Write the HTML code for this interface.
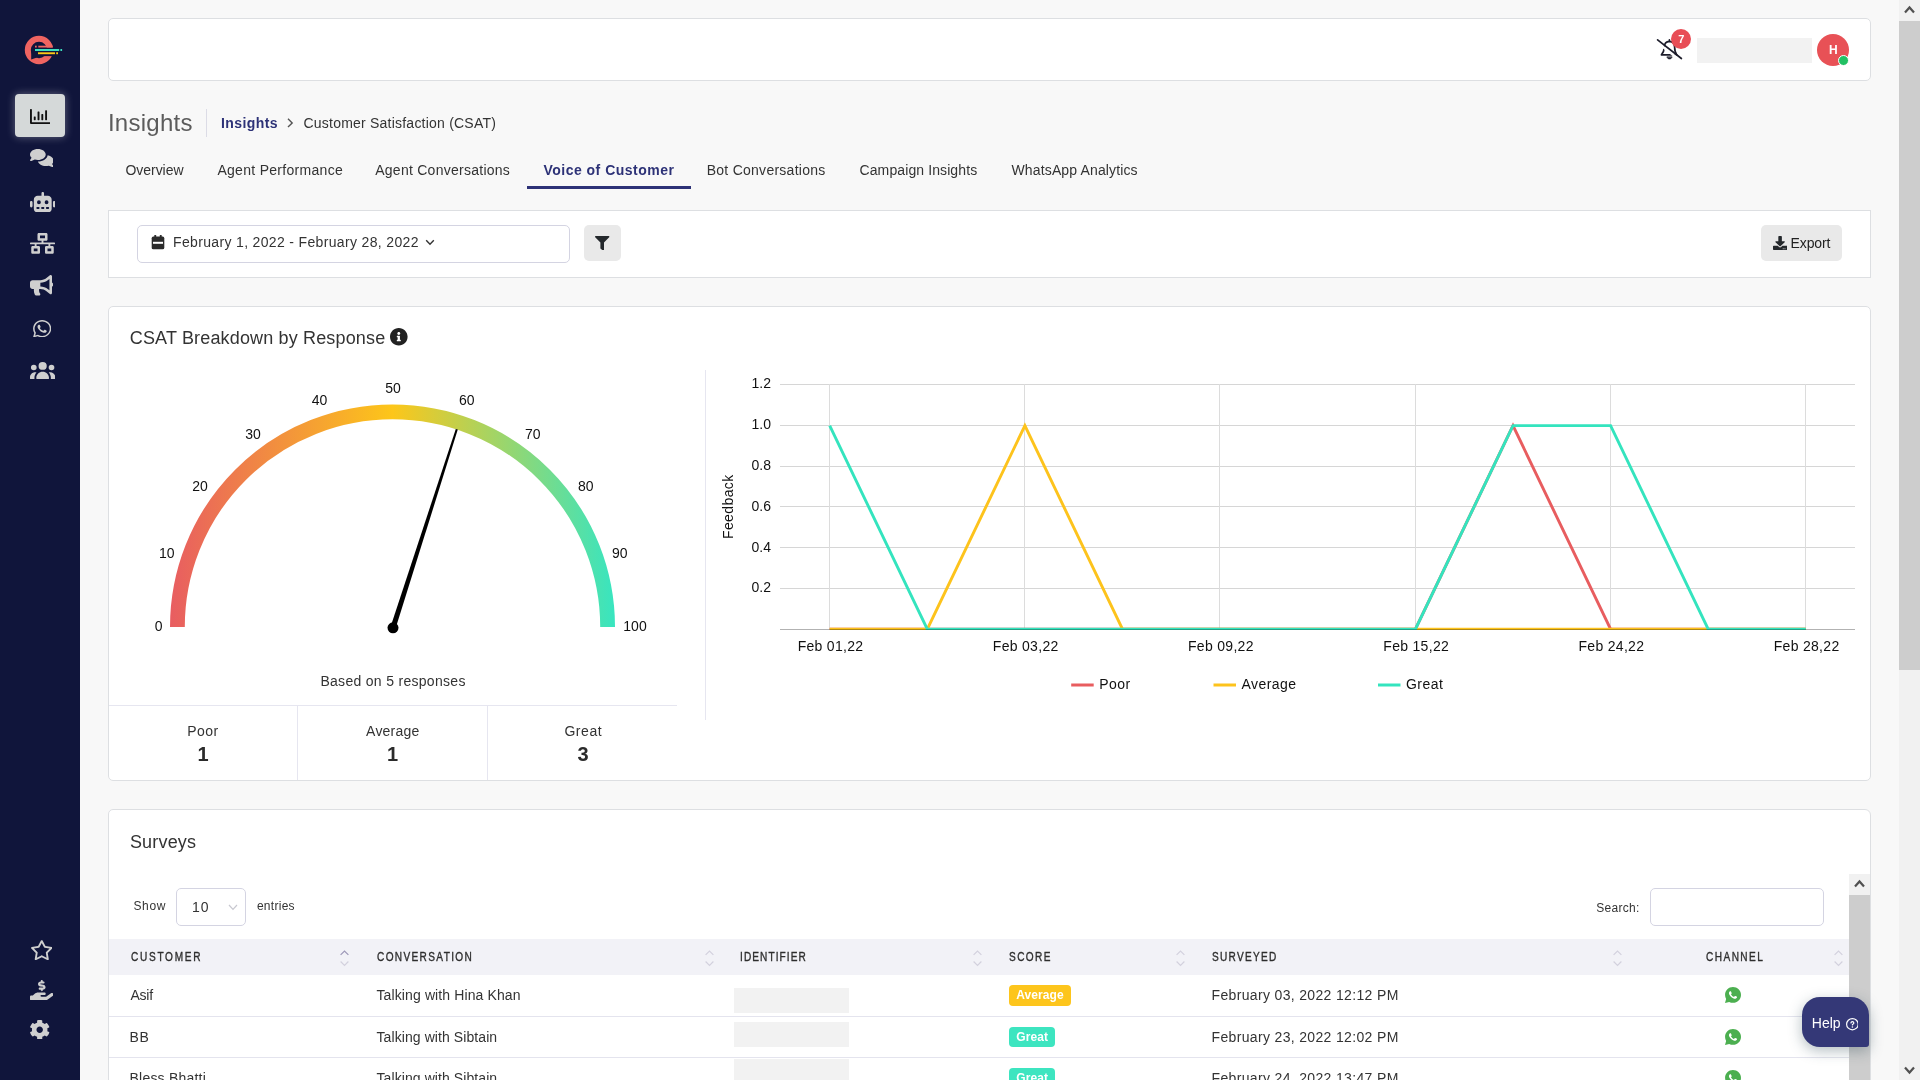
<!DOCTYPE html>
<html lang="en">
<head>
<meta charset="utf-8">
<title>Insights - Customer Satisfaction (CSAT)</title>
<style>
*{box-sizing:border-box;margin:0;padding:0}
html,body{width:1920px;height:1080px;overflow:hidden}
body{background:#f8f8f8;font-family:"Liberation Sans",Arial,sans-serif;color:#333;font-size:14px;position:relative}
#wrap{position:absolute;left:0;top:0;width:1920px;height:1080px;will-change:transform;transform:translateZ(0)}
.abs{position:absolute}
.t{position:absolute;white-space:nowrap;line-height:20px;height:20px}
#sidebar{position:absolute;left:0;top:0;width:80px;height:1080px;background:#10153b}
#sidebar svg{fill:#cfcfcf}
.card{position:absolute;background:#fff;border:1px solid #dddfe2}
.ph{position:absolute;background:#f2f2f2}
.rl{position:absolute;left:109px;width:1740px;height:1px;background:#e4e4ee}
.sa{position:absolute;width:9px;height:5.4px;fill:none;stroke:#d3d1de;stroke-width:1.2}
</style>
</head>
<body>
<div id="wrap">
<div id="sidebar"><svg class="abs" style="left:20px;top:30px;width:50px;height:40px;fill:none" viewBox="20 30 50 40">
<circle cx="39" cy="50" r="11.2" stroke="#ef6461" stroke-width="6"/>
<path d="M31.2 50 L31.2 59.6 L37 57.5 Z" fill="#10153b"/>
<rect x="44" y="47.5" width="11" height="8.6" fill="#10153b"/>
<rect x="38.3" y="45.7" width="14.2" height="1.8" fill="#ef6461"/><rect x="35" y="45.7" width="1.7" height="1.8" fill="#ef6461"/>
<rect x="35" y="49" width="24.2" height="2" fill="#3de0c0"/><rect x="60.4" y="49" width="1.7" height="2" fill="#3de0c0"/>
<rect x="38" y="52.3" width="17" height="1.9" fill="#ffc914"/><rect x="56.2" y="52.3" width="1.8" height="1.9" fill="#ffc914"/>
</svg><div class="abs" style="left:15px;top:94px;width:50px;height:43px;background:#d5d9d9;border-radius:4px;box-shadow:0 0 9px rgba(255,255,255,.35)"></div><svg class="abs" style="left:30.0px;top:108.8px;width:20.2px;height:15.0px;fill:#111;" viewBox="0 64 512 384" preserveAspectRatio="none"><path d="M396.8 352h22.4c6.4 0 12.8-6.4 12.8-12.8V108.8c0-6.4-6.4-12.8-12.8-12.8h-22.4c-6.4 0-12.8 6.4-12.8 12.8v230.4c0 6.4 6.4 12.8 12.8 12.8zm-192 0h22.4c6.4 0 12.8-6.4 12.8-12.8V140.8c0-6.4-6.4-12.8-12.8-12.8h-22.4c-6.4 0-12.8 6.4-12.8 12.8v198.4c0 6.4 6.4 12.8 12.8 12.8zm96 0h22.4c6.4 0 12.8-6.4 12.8-12.8V204.8c0-6.4-6.4-12.8-12.8-12.8h-22.4c-6.4 0-12.8 6.4-12.8 12.8v134.4c0 6.4 6.4 12.8 12.8 12.8zM496 400H48V80c0-8.84-7.16-16-16-16H16C7.16 64 0 71.16 0 80v336c0 17.67 14.33 32 32 32h464c8.84 0 16-7.16 16-16v-16c0-8.84-7.16-16-16-16zm-387.2-48h22.4c6.4 0 12.800-6.4 12.800-12.8v-70.4c0-6.4-6.4-12.8-12.8-12.8h-22.4c-6.4 0-12.8 6.4-12.8 12.8v70.4c0 6.4 6.4 12.8 12.8 12.800z"/></svg><svg class="abs" style="left:29.6px;top:149.3px;width:23.6px;height:18.1px;" viewBox="-0.0 -32 576.0 576.0" preserveAspectRatio="none"><path d="M384 144c0 97.2-86 176-192 176-26.7 0-52.1-5-75.2-14l-81.6 43.2c-9.3 4.9-20.7 3.2-28.2-4.2s-9.2-18.9-4.2-28.2l35.6-67.2C14.3 220.2 0 183.6 0 144 0 46.8 86-32 192-32s192 78.8 192 176m0 368c-94.1 0-172.4-62.1-188.8-144 120-1.5 224.3-86.9 235.8-202.7 83.3 19.2 145 88.3 145 170.7 0 39.6-14.3 76.2-38.4 105.6l35.6 67.2c4.9 9.3 3.2 20.7-4.2 28.2s-18.9 9.2-28.2 4.2L459.2 498c-23.1 9-48.5 14-75.2 14"/></svg><svg class="abs" style="left:29.6px;top:191.5px;width:25.5px;height:20.5px;" viewBox="0 -32 640 512" preserveAspectRatio="none"><path d="M352 0c0-17.7-14.3-32-32-32s-32 14.3-32 32v64h-96c-53 0-96 43-96 96v224c0 53 43 96 96 96h256c53 0 96-43 96-96V160c0-53-43-96-96-96h-96zM160 368c0-13.3 10.7-24 24-24h32c13.3 0 24 10.7 24 24s-10.7 24-24 24h-32c-13.3 0-24-10.7-24-24m120 0c0-13.3 10.7-24 24-24h32c13.3 0 24 10.7 24 24s-10.7 24-24 24h-32c-13.3 0-24-10.7-24-24m120 0c0-13.3 10.7-24 24-24h32c13.3 0 24 10.7 24 24s-10.7 24-24 24h-32c-13.3 0-24-10.7-24-24M224 176a48 48 0 1 1 0 96 48 48 0 1 1 0-96m144 48a48 48 0 1 1 96 0 48 48 0 1 1-96 0m-304 0c0-17.7-14.3-32-32-32S0 206.3 0 224v96c0 17.7 14.3 32 32 32s32-14.3 32-32zm544-32c-17.7 0-32 14.3-32 32v96c0 17.7 14.3 32 32 32s32-14.3 32-32v-96c0-17.7-14.3-32-32-32"/></svg><svg class="abs" style="left:30.0px;top:233.0px;width:25.0px;height:20.8px;" viewBox="0 0 640 512" preserveAspectRatio="none"><path d="M640 264v-16c0-8.840-7.160-16-16-16H344v-40h72c17.670 0 32-14.330 32-32V32c0-17.670-14.330-32-32-32H224c-17.670 0-32 14.330-32 32v128c0 17.670 14.330 32 32 32h72v40H16c-8.840 0-16 7.160-16 16v16c0 8.840 7.160 16 16 16h104v40H64c-17.670 0-32 14.330-32 32v128c0 17.670 14.330 32 32 32h160c17.670 0 32-14.330 32-32V352c0-17.670-14.330-32-32-32h-56v-40h304v40h-56c-17.670 0-32 14.330-32 32v128c0 17.670 14.330 32 32 32h160c17.670 0 32-14.330 32-32V352c0-17.670-14.330-32-32-32h-56v-40h104c8.840 0 16-7.160 16-16zM256 128V64h128v64H256zm-64 320H96v-64h96v64zm352 0h-96v-64h96v64z"/></svg><svg class="abs" style="left:29.7px;top:275.3px;width:23.3px;height:20.5px;" viewBox="0 0 576 512" preserveAspectRatio="none"><path d="M576 240c0-23.630-12.950-44.040-32-55.120V32.010C544 23.260 537.020 0 512 0c-7.120 0-14.190 2.380-19.980 7.020l-85.030 68.030C364.280 109.190 310.660 128 256 128H64c-35.350 0-64 28.650-64 64v96c0 35.350 28.650 64 64 64h33.700c-1.390 10.480-2.180 21.140-2.180 32 0 39.770 9.260 77.350 25.560 110.940 5.190 10.690 16.520 17.060 28.400 17.060h74.280c26.050 0 41.690-29.840 25.900-50.560-16.400-21.520-26.150-48.360-26.150-77.440 0-11.110 1.620-21.790 4.410-32H256c54.660 0 108.280 18.810 150.980 52.950l85.030 68.030a32.023 32.023 0 0 0 19.980 7.020c24.920 0 32-22.780 32-32V295.130C563.050 284.040 576 263.630 576 240zm-96 141.420l-33.050-26.440C392.950 311.780 325.120 288 256 288v-96c69.120 0 136.950-23.780 190.950-66.980L480 98.580v282.840z"/></svg><svg class="abs" style="left:33.0px;top:319.7px;width:18.3px;height:17.5px;" viewBox="0 32 448 448" preserveAspectRatio="none"><path d="M380.9 97.1C339 55.1 283.2 32 223.9 32c-122.4 0-222 99.6-222 222 0 39.1 10.2 77.3 29.6 111L0 480l117.7-30.9c32.4 17.7 68.9 27 106.1 27h.1c122.3 0 224.1-99.6 224.1-222 0-59.3-25.2-115-67.1-157m-157 341.6c-33.2 0-65.7-8.9-94-25.7l-6.7-4-69.8 18.3L72 359.2l-4.4-7c-18.5-29.4-28.2-63.3-28.2-98.2 0-101.7 82.8-184.5 184.6-184.5 49.3 0 95.6 19.2 130.4 54.1s56.2 81.2 56.1 130.5c0 101.8-84.9 184.6-186.6 184.6m101.2-138.2c-5.5-2.8-32.8-16.2-37.9-18-5.1-1.9-8.8-2.8-12.5 2.8s-14.3 18-17.6 21.8c-3.2 3.7-6.5 4.2-12 1.4-32.6-16.3-54-29.1-75.5-66-5.7-9.8 5.7-9.1 16.3-30.3 1.8-3.7.9-6.9-.5-9.7s-12.5-30.1-17.1-41.2c-4.5-10.8-9.1-9.3-12.5-9.5-3.2-.2-6.9-.2-10.6-.2s-9.7 1.4-14.8 6.9c-5.1 5.6-19.4 19-19.4 46.3s19.9 53.7 22.6 57.4c2.8 3.7 39.1 59.7 94.8 83.8 35.2 15.2 49 16.5 66.6 13.9 10.7-1.6 32.8-13.4 37.4-26.4s4.6-24.1 3.2-26.4c-1.3-2.5-5-3.9-10.5-6.6"/></svg><svg class="abs" style="left:30.0px;top:361.7px;width:25.3px;height:17.5px;" viewBox="0 16 640 464" preserveAspectRatio="none"><path d="M320 16a104 104 0 1 1 0 208 104 104 0 1 1 0-208M96 88a72 72 0 1 1 0 144 72 72 0 1 1 0-144M0 416c0-70.7 57.3-128 128-128 12.8 0 25.2 1.9 36.9 5.4C132 330.2 112 378.8 112 432v16c0 11.4 2.4 22.2 6.7 32H32c-17.7 0-32-14.3-32-32zm521.3 64c4.3-9.8 6.7-20.6 6.7-32v-16c0-53.2-20-101.8-52.9-138.6 11.7-3.5 24.1-5.4 36.9-5.4 70.7 0 128 57.3 128 128v32c0 17.7-14.3 32-32 32zM472 160a72 72 0 1 1 144 0 72 72 0 1 1-144 0M160 432c0-88.4 71.6-160 160-160s160 71.6 160 160v16c0 17.7-14.3 32-32 32H192c-17.7 0-32-14.3-32-32z"/></svg><svg class="abs" style="left:30.5px;top:939.5px;width:21.5px;height:20.2px;" viewBox="13.0 -32 550.2 525.6" preserveAspectRatio="none"><path d="M288.1-32c9 0 17.3 5.1 21.4 13.1L383 125.3l159.9 25.4c8.9 1.4 16.3 7.7 19.1 16.3s.5 18-5.8 24.4L441.7 305.9 467 465.8c1.4 8.9-2.3 17.9-9.6 23.2s-17 6.1-25 2l-144.3-73.4L143.8 491c-8 4.1-17.7 3.3-25-2s-11-14.2-9.6-23.2l25.2-159.9L20 191.4c-6.4-6.4-8.6-15.8-5.8-24.4s10.1-14.9 19.1-16.3l159.9-25.4 73.6-144.2c4.1-8 12.4-13.1 21.4-13.1zm0 76.8L230.3 158c-3.5 6.8-10 11.6-17.6 12.8l-125.5 20 89.8 89.9c5.4 5.4 7.9 13.1 6.7 20.7l-19.8 125.5 113.3-57.6c6.8-3.5 14.9-3.5 21.8 0l113.3 57.6-19.8-125.5c-1.2-7.6 1.3-15.3 6.7-20.7l89.8-89.9-125.5-20c-7.6-1.2-14.1-6-17.6-12.8z"/></svg><svg class="abs" style="left:29.7px;top:979.5px;width:23.6px;height:20.5px;" viewBox="0 -16 576.1 528" preserveAspectRatio="none"><path d="M288-16c-13.3 0-24 10.7-24 24v12h-1.8C225.6 20 196 49.7 196 86.2c0 33.4 24.9 61.6 58 65.7l61 7.6c5.1.6 9 5 9 10.2 0 5.7-4.6 10.2-10.2 10.2l-73.8.1c-15.5 0-28 12.5-28 28s12.5 28 28 28h24v12c0 13.3 10.7 24 24 24s24-10.7 24-24v-12h1.8c36.6 0 66.2-29.7 66.2-66.2 0-33.4-24.9-61.6-58-65.7l-61-7.6c-5.1-.6-9-5-9-10.2 0-5.7 4.6-10.2 10.2-10.2L328 76c15.5 0 28-12.5 28-28s-12.5-28-28-28h-16V8c0-13.3-10.7-24-24-24M109.3 341.5 66.7 384H32c-17.7 0-32 14.3-32 32v64c0 17.7 14.3 32 32 32h320.5c29 0 57.3-9.3 80.7-26.5l126.6-93.3c17.8-13.1 21.6-38.1 8.5-55.9s-38.1-21.6-55.9-8.5L392.6 416H280c-13.3 0-24-10.7-24-24s10.7-24 24-24h72c17.7 0 32-14.3 32-32s-14.3-32-32-32H199.8c-33.9 0-66.5 13.5-90.5 37.5"/></svg><svg class="abs" style="left:30.3px;top:1019.7px;width:19.4px;height:19.5px;" viewBox="16 8 480 496" preserveAspectRatio="none"><path d="M487.400 315.700l-42.600-24.600c4.300-23.200 4.300-47 0-70.200l42.600-24.600c4.900-2.800 7.100-8.600 5.500-14-11.100-35.600-30-67.800-54.700-94.600-3.800-4.100-10-5.100-14.800-2.300L380.800 110c-17.900-15.400-38.500-27.300-60.800-35.100V25.800c0-5.600-3.900-10.500-9.400-11.700-36.700-8.200-74.300-7.800-109.200 0-5.500 1.200-9.400 6.100-9.400 11.700V75c-22.200 7.900-42.800 19.800-60.800 35.100L88.700 85.500c-4.900-2.800-11-1.900-14.800 2.300-24.700 26.700-43.600 58.900-54.700 94.600-1.700 5.400.6 11.200 5.500 14L67.300 221c-4.300 23.200-4.300 47 0 70.200l-42.600 24.600c-4.900 2.800-7.100 8.600-5.500 14 11.100 35.600 30 67.800 54.700 94.600 3.800 4.100 10 5.100 14.800 2.300l42.600-24.600c17.900 15.400 38.500 27.300 60.800 35.100v49.200c0 5.600 3.900 10.500 9.400 11.700 36.700 8.200 74.300 7.800 109.200 0 5.500-1.200 9.400-6.100 9.400-11.700v-49.200c22.200-7.900 42.800-19.800 60.800-35.100l42.600 24.600c4.900 2.800 11 1.900 14.800-2.300 24.700-26.700 43.600-58.900 54.700-94.600 1.500-5.500-.7-11.300-5.600-14.100zM256 336c-44.100 0-80-35.900-80-80s35.900-80 80-80 80 35.900 80 80-35.900 80-80 80z"/></svg></div>
<div class="card" id="topbar" style="left:108px;top:18px;width:1763px;height:63px;border-radius:5px"></div><svg class="abs" style="left:1650px;top:34px;width:40px;height:30px;fill:none;stroke:#1d1d2b;stroke-linecap:round;stroke-linejoin:round" viewBox="1650 34 40 30">
<path d="M1661.4 54.9 L1676.8 54.9 C1675 52.6 1674.7 50 1674.6 47 C1674.5 43.6 1672.4 41.6 1669.4 41.4 C1666.4 41.6 1664.4 43.8 1664.3 47 C1664.2 50 1663.5 52.4 1661.4 54.9 Z M1669.4 41.2 L1669.4 39.9" stroke-width="1.7"/>
<path d="M1656.2 41.6 L1680 60.3" stroke="#fff" stroke-width="2.6"/>
<path d="M1657.6 39.8 L1681.4 58.5" stroke-width="1.7"/>
<path d="M1667 57.2 C1667.4 59.6 1671.6 59.6 1672 57.2 Z" fill="#1d1d2b" stroke-width=".8"/>
</svg><div class="abs" style="left:1671px;top:29px;width:20px;height:20px;border-radius:50%;background:#e84d56"></div><div class="t" style="left:1678.20px;top:29px;font-size:11px;letter-spacing:0.000px;color:#fff;font-weight:700;">7</div><div class="ph" style="left:1697px;top:38px;width:115px;height:25px"></div><div class="abs" style="left:1817px;top:34px;width:32px;height:32px;border-radius:50%;background:#e85156"></div><div class="t" style="left:1828.90px;top:40px;font-size:12px;letter-spacing:0.000px;color:#fff;font-weight:700;">H</div><div class="abs" style="left:1838px;top:55px;width:11px;height:11px;border-radius:50%;background:#21c063;border:1px solid #fff"></div>
<div class="t" style="left:107.90px;top:113px;font-size:24px;letter-spacing:0.271px;color:#5c5c5c;">Insights</div><div class="abs" style="left:206px;top:109px;width:1px;height:28px;background:#dcdce6"></div><div class="t" style="left:220.90px;top:113px;font-size:14px;letter-spacing:0.429px;color:#2d3277;font-weight:700;">Insights</div><svg class="abs" style="left:286px;top:117px;width:8px;height:12px;fill:none;stroke:#555;stroke-width:1.4" viewBox="0 0 8 12"><path d="M2 1.7 L6.2 5.9 L2 10.1"/></svg><div class="t" style="left:303.50px;top:113px;font-size:14px;letter-spacing:0.219px;color:#333;">Customer Satisfaction (CSAT)</div><div class="t" style="left:125.50px;top:160px;font-size:14px;letter-spacing:-0.043px;color:#333;">Overview</div><div class="t" style="left:217.40px;top:160px;font-size:14px;letter-spacing:0.294px;color:#333;">Agent Performance</div><div class="t" style="left:375.20px;top:160px;font-size:14px;letter-spacing:0.261px;color:#333;">Agent Conversations</div><div class="t" style="left:706.70px;top:160px;font-size:14px;letter-spacing:0.263px;color:#333;">Bot Conversations</div><div class="t" style="left:859.50px;top:160px;font-size:14px;letter-spacing:0.106px;color:#333;">Campaign Insights</div><div class="t" style="left:1011.50px;top:160px;font-size:14px;letter-spacing:0.141px;color:#333;">WhatsApp Analytics</div><div class="t" style="left:543.50px;top:160px;font-size:14px;letter-spacing:0.481px;color:#2d3277;font-weight:700;">Voice of Customer</div><div class="abs" style="left:527px;top:186px;width:164px;height:3px;background:#2d3277"></div>
<div class="card" style="left:108px;top:210px;width:1763px;height:68px"></div><div class="abs" style="left:137px;top:225px;width:433px;height:38px;border:1px solid #d4d4e2;border-radius:5px;background:#fff"></div><svg class="abs" style="left:151px;top:234px;width:14px;height:16px;fill:#2b2b2b" viewBox="151 234 14 16">
<path d="M153.3 236.6 H162.7 Q164.3 236.6 164.3 238.2 V247.7 Q164.3 249.3 162.700 249.300 H153.300 Q151.700 249.300 151.700 247.700 V238.200 Q151.700 236.600 153.300 236.600 Z"/>
<rect x="154.300" y="235" width="1.900" height="3" rx=".5"/><rect x="159.800" y="235" width="1.900" height="3" rx=".5"/>
<rect x="153" y="241.800" width="10" height="2" fill="#fff"/></svg><div class="t" style="left:173.00px;top:232px;font-size:14px;letter-spacing:0.343px;color:#333;">February 1, 2022 - February 28, 2022</div><svg class="abs" style="left:425px;top:239px;width:10px;height:7px;fill:none;stroke:#333;stroke-width:1.400" viewBox="0 0 10 7"><path d="M1.200 1.300 L5 5.200 L8.800 1.300"/></svg><div class="abs" style="left:584px;top:225px;width:37px;height:36px;border-radius:5px;background:#e9e9e9"></div><svg class="abs" style="left:595.2px;top:235.8px;width:14.4px;height:14.6px;fill:#24282c;" viewBox="0 0 512 512" preserveAspectRatio="none"><path d="M487.976 0H24.028C2.710 0-8.047 25.866 7.058 40.971L192 225.941V432c0 7.831 3.821 15.170 10.237 19.662l80 55.980C298.020 518.690 320 507.493 320 487.980V225.941l184.947-184.970C520.021 25.896 509.338 0 487.976 0z"/></svg><div class="abs" style="left:1761px;top:225px;width:81px;height:36px;border-radius:5px;background:#e9e9e9"></div><svg class="abs" style="left:1772.9px;top:236.0px;width:14.2px;height:14.0px;fill:#24282c;" viewBox="0 0 512 512" preserveAspectRatio="none"><path d="M216 0h80c13.300 0 24 10.700 24 24v168h87.700c17.800 0 26.700 21.500 14.100 34.100L269.700 378.300c-7.500 7.500-19.800 7.500-27.300 0L90.100 226.100c-12.600-12.600-3.700-34.100 14.100-34.100H192V24c0-13.300 10.700-24 24-24zm296 376v112c0 13.300-10.700 24-24 24H24c-13.300 0-24-10.700-24-24V376c0-13.300 10.700-24 24-24h146.700l49 49c20.100 20.100 52.500 20.100 72.600 0l49-49H488c13.300 0 24 10.700 24 24zm-124 88c0-11-9-20-20-20s-20 9-20 20 9 20 20 20 20-9 20-20zm64 0c0-11-9-20-20-20s-20 9-20 20 9 20 20 20 20-9 20-20z"/></svg><div class="t" style="left:1790.50px;top:233px;font-size:14px;letter-spacing:-0.100px;color:#222;">Export</div>
<div class="card" style="left:108px;top:306px;width:1763px;height:475px;border-radius:5px"></div><div class="t" style="left:129.80px;top:328px;font-size:18px;letter-spacing:0.156px;color:#333;">CSAT Breakdown by Response</div><svg class="abs" style="left:390.3px;top:328.4px;width:17.6px;height:17.6px;fill:#222;" viewBox="8 8 496 496" preserveAspectRatio="none"><path d="M256 8C119.043 8 8 119.083 8 256c0 136.997 111.043 248 248 248s248-111.003 248-248C504 119.083 392.957 8 256 8zm0 110c23.196 0 42 18.804 42 42s-18.804 42-42 42-42-18.804-42-42 18.804-42 42-42zm56 254c0 6.627-5.373 12-12 12h-88c-6.627 0-12-5.373-12-12v-24c0-6.627 5.373-12 12-12h12v-64h-12c-6.627 0-12-5.373-12-12v-24c0-6.627 5.373-12 12-12h64c6.627 0 12 5.373 12 12v100h12c6.627 0 12 5.373 12 12v24z"/></svg><svg class="abs" style="left:108px;top:360px;width:590px;height:340px" viewBox="108 360 590 340" font-family="Liberation Sans, Arial, sans-serif" font-size="14" fill="#111"><defs><linearGradient id="gg" gradientUnits="userSpaceOnUse" x1="170" y1="0" x2="615" y2="0"><stop offset="0" stop-color="#e85d61"/><stop offset=".5" stop-color="#fdc619"/><stop offset="1" stop-color="#38e5c0"/></linearGradient></defs><path d="M177.4 627 A215.1 215.1 0 0 1 607.6 627" fill="none" stroke="url(#gg)" stroke-width="14.8"/><text x="158.7" y="631" text-anchor="middle">0</text><text x="166.7" y="558.3" text-anchor="middle">10</text><text x="200" y="491" text-anchor="middle">20</text><text x="253" y="439" text-anchor="middle">30</text><text x="319.6" y="405" text-anchor="middle">40</text><text x="393" y="393.3" text-anchor="middle">50</text><text x="466.7" y="405" text-anchor="middle">60</text><text x="532.7" y="439" text-anchor="middle">70</text><text x="585.7" y="491" text-anchor="middle">80</text><text x="619.7" y="558.3" text-anchor="middle">90</text><text x="635" y="631" text-anchor="middle">100</text><path d="M390.5 627.0 L455.8 428.9 L457.8 429.5 L395.5 628.6 Z" fill="#000"/><circle cx="393" cy="627.8" r="5.5" fill="#000"/></svg><div class="t" style="left:320.40px;top:671px;font-size:14px;letter-spacing:0.300px;color:#333;">Based on 5 responses</div><div class="abs" style="left:109px;top:705px;width:568px;height:1px;background:#e6e6f0"></div><div class="abs" style="left:297px;top:705px;width:1px;height:75px;background:#e6e6f0"></div><div class="abs" style="left:487px;top:705px;width:1px;height:75px;background:#e6e6f0"></div><div class="abs" style="left:705px;top:370px;width:1px;height:350px;background:#e6e6f0"></div><div class="t" style="left:187.20px;top:721px;font-size:14px;letter-spacing:0.500px;color:#333;">Poor</div><div class="t" style="left:366.10px;top:721px;font-size:14px;letter-spacing:0.217px;color:#333;">Average</div><div class="t" style="left:564.40px;top:721px;font-size:14px;letter-spacing:0.550px;color:#333;">Great</div><div class="t" style="left:197.40px;top:744px;font-size:20px;letter-spacing:0.000px;color:#2b2b2b;font-weight:700;">1</div><div class="t" style="left:386.90px;top:744px;font-size:20px;letter-spacing:0.000px;color:#2b2b2b;font-weight:700;">1</div><div class="t" style="left:577.50px;top:744px;font-size:20px;letter-spacing:0.000px;color:#2b2b2b;font-weight:700;">3</div><svg class="abs" style="left:710px;top:360px;width:1160px;height:350px" viewBox="710 360 1160 350" font-family="Liberation Sans, Arial, sans-serif" font-size="14" fill="#111"><line x1="780" x2="1855" y1="384.5" y2="384.5" stroke="#d6d6d6" stroke-width="1"/><line x1="780" x2="1855" y1="425.5" y2="425.5" stroke="#d6d6d6" stroke-width="1"/><line x1="780" x2="1855" y1="466.5" y2="466.5" stroke="#d6d6d6" stroke-width="1"/><line x1="780" x2="1855" y1="506.5" y2="506.5" stroke="#d6d6d6" stroke-width="1"/><line x1="780" x2="1855" y1="547.5" y2="547.5" stroke="#d6d6d6" stroke-width="1"/><line x1="780" x2="1855" y1="588.5" y2="588.5" stroke="#d6d6d6" stroke-width="1"/><line x1="829.5" x2="829.5" y1="384" y2="629" stroke="#dcdcdc" stroke-width="1"/><line x1="1024.5" x2="1024.5" y1="384" y2="629" stroke="#dcdcdc" stroke-width="1"/><line x1="1219.5" x2="1219.5" y1="384" y2="629" stroke="#dcdcdc" stroke-width="1"/><line x1="1415.5" x2="1415.5" y1="384" y2="629" stroke="#dcdcdc" stroke-width="1"/><line x1="1610.5" x2="1610.5" y1="384" y2="629" stroke="#dcdcdc" stroke-width="1"/><line x1="1805.5" x2="1805.5" y1="384" y2="629" stroke="#dcdcdc" stroke-width="1"/><text x="771" y="388.3" text-anchor="end">1.2</text><text x="771" y="429.1" text-anchor="end">1.0</text><text x="771" y="469.9" text-anchor="end">0.8</text><text x="771" y="510.7" text-anchor="end">0.6</text><text x="771" y="551.5" text-anchor="end">0.4</text><text x="771" y="592.3" text-anchor="end">0.2</text><text x="830.5" y="650.8" text-anchor="middle" letter-spacing=".3">Feb 01,22</text><text x="1025.7" y="650.8" text-anchor="middle" letter-spacing=".3">Feb 03,22</text><text x="1220.9" y="650.8" text-anchor="middle" letter-spacing=".3">Feb 09,22</text><text x="1416.2" y="650.8" text-anchor="middle" letter-spacing=".3">Feb 15,22</text><text x="1611.4" y="650.8" text-anchor="middle" letter-spacing=".3">Feb 24,22</text><text x="1806.6" y="650.8" text-anchor="middle" letter-spacing=".3">Feb 28,22</text><text transform="translate(733 506.7) rotate(-90)" text-anchor="middle" letter-spacing=".4">Feedback</text><clipPath id="cp"><rect x="780" y="380" width="1080" height="250"/></clipPath><g clip-path="url(#cp)" fill="none" stroke-width="2.9" stroke-linejoin="miter"><polyline points="829.7,629.2 927.3,629.2 1024.9,629.2 1122.5,629.2 1220.1,629.2 1317.8,629.2 1415.4,629.2 1513.0,425.6 1610.6,629.2 1708.2,629.2 1805.8,629.2" stroke="#e85d5f"/><polyline points="829.7,629.2 927.3,629.2 1024.9,425.6 1122.5,629.2 1220.1,629.2 1317.8,629.2 1415.4,629.2 1513.0,629.2 1610.6,629.2 1708.2,629.2 1805.8,629.2" stroke="#fdc31c"/><polyline points="829.7,425.6 927.3,629.2 1024.9,629.2 1122.5,629.2 1220.1,629.2 1317.8,629.2 1415.4,629.2 1513.0,425.6 1610.6,425.6 1708.2,629.2 1805.8,629.2" stroke="#34e4be"/></g><line x1="780" x2="1855" y1="629.5" y2="629.5" stroke="rgba(0,0,0,.3)" stroke-width="1"/><line x1="1071.2" x2="1093.7" y1="685" y2="685" stroke="#e85d5f" stroke-width="3"/><text x="1099.2" y="688.8" letter-spacing=".45">Poor</text><line x1="1213.5" x2="1236.0" y1="685" y2="685" stroke="#fdc31c" stroke-width="3"/><text x="1241.5" y="688.8" letter-spacing=".45">Average</text><line x1="1378" x2="1400.5" y1="685" y2="685" stroke="#34e4be" stroke-width="3"/><text x="1406" y="688.8" letter-spacing=".45">Great</text></svg>
<div class="card" style="left:108px;top:809px;width:1763px;height:300px;border-radius:5px 6px 0 0"></div><div class="t" style="left:129.90px;top:832px;font-size:18px;letter-spacing:0.183px;color:#333;">Surveys</div><div class="t" style="left:133.40px;top:896px;font-size:12px;letter-spacing:0.667px;color:#333;">Show</div><div class="abs" style="left:176px;top:888px;width:70px;height:38px;border:1px solid #d4d4e2;border-radius:5px;background:#fff"></div><div class="t" style="left:192.00px;top:897px;font-size:14px;letter-spacing:0.900px;color:#333;">10</div><svg class="abs" style="left:228.200px;top:904px;width:10px;height:7px;fill:none;stroke:#c8c8d0;stroke-width:1.200" viewBox="0 0 10 7"><path d="M1 1 L5 5.400 L9 1"/></svg><div class="t" style="left:256.90px;top:896px;font-size:12px;letter-spacing:0.283px;color:#333;">entries</div><div class="t" style="left:1596.30px;top:898px;font-size:12px;letter-spacing:0.283px;color:#333;">Search:</div><div class="abs" style="left:1650px;top:888px;width:174px;height:38px;border:1px solid #d4d4e2;border-radius:5px;background:#fff"></div><div class="abs" style="left:109px;top:939px;width:1740px;height:36px;background:#f2f2f7"></div><div class="t" style="left:130.50px;top:947px;font-size:12px;letter-spacing:2.037px;color:#2e2e2e;-webkit-text-stroke:0.35px #2e2e2e;transform:scaleX(0.84);transform-origin:0 50%;">CUSTOMER</div><div class="t" style="left:376.50px;top:947px;font-size:12px;letter-spacing:1.613px;color:#2e2e2e;-webkit-text-stroke:0.35px #2e2e2e;transform:scaleX(0.84);transform-origin:0 50%;">CONVERSATION</div><div class="t" style="left:740.16px;top:947px;font-size:12px;letter-spacing:1.296px;color:#2e2e2e;-webkit-text-stroke:0.35px #2e2e2e;transform:scaleX(0.84);transform-origin:0 50%;">IDENTIFIER</div><div class="t" style="left:1009.36px;top:947px;font-size:12px;letter-spacing:1.673px;color:#2e2e2e;-webkit-text-stroke:0.35px #2e2e2e;transform:scaleX(0.84);transform-origin:0 50%;">SCORE</div><div class="t" style="left:1212.06px;top:947px;font-size:12px;letter-spacing:1.514px;color:#2e2e2e;-webkit-text-stroke:0.35px #2e2e2e;transform:scaleX(0.84);transform-origin:0 50%;">SURVEYED</div><div class="t" style="left:1705.50px;top:947px;font-size:12px;letter-spacing:1.730px;color:#2e2e2e;-webkit-text-stroke:0.35px #2e2e2e;transform:scaleX(0.84);transform-origin:0 50%;">CHANNEL</div><svg class="sa" style="left:339.5px;top:950.4px;stroke:#9d98b8" viewBox="0 0 9 5.400"><path d="M.6 4.900 L4.500 1 L8.400 4.900"/></svg><svg class="sa" style="left:339.5px;top:961.2px" viewBox="0 0 9 5.400"><path d="M.6 .5 L4.500 4.400 L8.400 .5"/></svg><svg class="sa" style="left:704.5px;top:950.4px;stroke:#d3d1de" viewBox="0 0 9 5.400"><path d="M.6 4.900 L4.500 1 L8.400 4.900"/></svg><svg class="sa" style="left:704.5px;top:961.2px" viewBox="0 0 9 5.400"><path d="M.6 .5 L4.500 4.400 L8.400 .5"/></svg><svg class="sa" style="left:972.5px;top:950.4px;stroke:#d3d1de" viewBox="0 0 9 5.400"><path d="M.6 4.900 L4.500 1 L8.400 4.900"/></svg><svg class="sa" style="left:972.5px;top:961.2px" viewBox="0 0 9 5.400"><path d="M.6 .5 L4.500 4.400 L8.400 .5"/></svg><svg class="sa" style="left:1175.5px;top:950.4px;stroke:#d3d1de" viewBox="0 0 9 5.400"><path d="M.6 4.900 L4.500 1 L8.400 4.900"/></svg><svg class="sa" style="left:1175.5px;top:961.2px" viewBox="0 0 9 5.400"><path d="M.6 .5 L4.500 4.400 L8.400 .5"/></svg><svg class="sa" style="left:1612.5px;top:950.4px;stroke:#d3d1de" viewBox="0 0 9 5.400"><path d="M.6 4.900 L4.500 1 L8.400 4.900"/></svg><svg class="sa" style="left:1612.5px;top:961.2px" viewBox="0 0 9 5.400"><path d="M.6 .5 L4.500 4.400 L8.400 .5"/></svg><svg class="sa" style="left:1833.5px;top:950.4px;stroke:#d3d1de" viewBox="0 0 9 5.400"><path d="M.6 4.900 L4.500 1 L8.400 4.900"/></svg><svg class="sa" style="left:1833.5px;top:961.2px" viewBox="0 0 9 5.400"><path d="M.6 .5 L4.500 4.400 L8.400 .5"/></svg><div class="t" style="left:130.50px;top:985px;font-size:14px;letter-spacing:-0.267px;color:#333;">Asif</div><div class="t" style="left:376.50px;top:985px;font-size:14px;letter-spacing:0.114px;color:#333;">Talking with Hina Khan</div><div class="ph" style="left:734px;top:988px;width:115px;height:24.500px"></div><div class="abs" style="left:1009px;top:985px;width:62px;height:20.700px;border-radius:4px;background:#fdc51c"></div><div class="t" style="left:1016.20px;top:985px;font-size:12px;letter-spacing:0.083px;color:#fff;font-weight:700;">Average</div><div class="t" style="left:1211.50px;top:985px;font-size:14px;letter-spacing:0.344px;color:#333;">February 03, 2022 12:12 PM</div><svg class="abs" style="left:1725.0px;top:986.8px;width:16px;height:16px" viewBox="0 32 448 448"><path d="M380.9 97.1C339 55.1 283.2 32 223.9 32c-122.4 0-222 99.6-222 222 0 39.1 10.2 77.3 29.6 111L0 480l117.7-30.900c32.400 17.700 68.900 27 106.100 27h.1c122.300 0 224.100-99.600 224.100-222 0-59.300-25.200-115-67.100-157z" fill="#4caf50"/><path d="M325.1 300.500c-5.500-2.800-32.800-16.200-37.900-18-5.100-1.900-8.800-2.800-12.500 2.800s-14.300 18-17.600 21.800c-3.200 3.700-6.500 4.200-12 1.400-32.600-16.300-54-29.100-75.500-66-5.700-9.800 5.700-9.100 16.300-30.300 1.800-3.700.9-6.900-.5-9.700s-12.500-30.100-17.100-41.200c-4.500-10.800-9.100-9.300-12.500-9.500-3.200-.2-6.900-.2-10.600-.2s-9.700 1.400-14.800 6.900c-5.100 5.600-19.400 19-19.400 46.300s19.900 53.700 22.600 57.400c2.800 3.700 39.100 59.700 94.800 83.800 35.200 15.200 49 16.500 66.600 13.900 10.700-1.600 32.800-13.400 37.400-26.400s4.600-24.100 3.200-26.400c-1.300-2.500-5-3.900-10.500-6.600z" fill="#fff"/></svg><div class="t" style="left:129.50px;top:1027px;font-size:14px;letter-spacing:0.600px;color:#333;">BB</div><div class="t" style="left:376.50px;top:1027px;font-size:14px;letter-spacing:0.084px;color:#333;">Talking with Sibtain</div><div class="ph" style="left:734px;top:1022.3px;width:115px;height:24.500px"></div><div class="abs" style="left:1009px;top:1027px;width:46px;height:20px;border-radius:4px;background:#3de5c0"></div><div class="t" style="left:1016.20px;top:1027px;font-size:12px;letter-spacing:0.125px;color:#fff;font-weight:700;">Great</div><div class="t" style="left:1211.50px;top:1027px;font-size:14px;letter-spacing:0.344px;color:#333;">February 23, 2022 12:02 PM</div><svg class="abs" style="left:1725.0px;top:1028.8px;width:16px;height:16px" viewBox="0 32 448 448"><path d="M380.9 97.1C339 55.1 283.2 32 223.9 32c-122.4 0-222 99.6-222 222 0 39.1 10.2 77.3 29.6 111L0 480l117.7-30.900c32.400 17.700 68.900 27 106.100 27h.1c122.300 0 224.100-99.600 224.100-222 0-59.300-25.200-115-67.100-157z" fill="#4caf50"/><path d="M325.1 300.500c-5.500-2.800-32.800-16.200-37.900-18-5.100-1.900-8.800-2.800-12.500 2.800s-14.300 18-17.600 21.800c-3.200 3.700-6.500 4.200-12 1.400-32.600-16.300-54-29.100-75.500-66-5.700-9.800 5.700-9.100 16.300-30.300 1.800-3.700.9-6.900-.5-9.700s-12.500-30.100-17.100-41.200c-4.500-10.800-9.100-9.300-12.500-9.500-3.200-.2-6.900-.2-10.600-.2s-9.700 1.400-14.800 6.900c-5.100 5.600-19.400 19-19.400 46.300s19.900 53.700 22.600 57.400c2.800 3.700 39.100 59.700 94.800 83.800 35.200 15.200 49 16.500 66.600 13.900 10.700-1.600 32.800-13.400 37.400-26.400s4.600-24.100 3.200-26.400c-1.300-2.500-5-3.900-10.500-6.600z" fill="#fff"/></svg><div class="t" style="left:129.50px;top:1068px;font-size:14px;letter-spacing:0.218px;color:#333;">Bless Bhatti</div><div class="t" style="left:376.50px;top:1068px;font-size:14px;letter-spacing:0.084px;color:#333;">Talking with Sibtain</div><div class="ph" style="left:734px;top:1059px;width:115px;height:24.500px"></div><div class="abs" style="left:1009px;top:1068.3px;width:46px;height:20px;border-radius:4px;background:#3de5c0"></div><div class="t" style="left:1016.20px;top:1068px;font-size:12px;letter-spacing:0.125px;color:#fff;font-weight:700;">Great</div><div class="t" style="left:1211.50px;top:1068px;font-size:14px;letter-spacing:0.344px;color:#333;">February 24, 2022 13:47 PM</div><svg class="abs" style="left:1725.0px;top:1069.8px;width:16px;height:16px" viewBox="0 32 448 448"><path d="M380.9 97.1C339 55.1 283.2 32 223.9 32c-122.4 0-222 99.6-222 222 0 39.1 10.2 77.3 29.6 111L0 480l117.7-30.900c32.400 17.700 68.900 27 106.100 27h.1c122.300 0 224.100-99.600 224.100-222 0-59.300-25.200-115-67.100-157z" fill="#4caf50"/><path d="M325.1 300.500c-5.500-2.800-32.800-16.200-37.900-18-5.100-1.900-8.800-2.800-12.500 2.800s-14.300 18-17.600 21.800c-3.200 3.700-6.500 4.200-12 1.400-32.600-16.300-54-29.100-75.500-66-5.700-9.800 5.700-9.100 16.300-30.300 1.800-3.700.9-6.900-.5-9.700s-12.500-30.100-17.100-41.200c-4.500-10.800-9.100-9.300-12.500-9.500-3.200-.2-6.900-.2-10.600-.2s-9.700 1.400-14.800 6.900c-5.100 5.600-19.400 19-19.400 46.300s19.900 53.700 22.600 57.400c2.800 3.700 39.100 59.700 94.800 83.800 35.200 15.200 49 16.500 66.600 13.900 10.700-1.600 32.800-13.400 37.400-26.400s4.600-24.100 3.200-26.400c-1.300-2.500-5-3.900-10.500-6.600z" fill="#fff"/></svg><div class="rl" style="top:1016px"></div><div class="rl" style="top:1057px"></div><div class="abs" style="left:1849px;top:874px;width:21px;height:206px;background:#cdcdcd"></div><div class="abs" style="left:1849px;top:874px;width:21px;height:21px;background:#f1f1f1"></div><svg class="abs" style="left:1854px;top:879px;width:11px;height:9px;fill:none;stroke:#505050;stroke-width:2.200" viewBox="0 0 11 9"><path d="M1 7.500 L5.500 2.500 L10 7.500"/></svg><div class="abs" style="left:1802px;top:997px;width:67px;height:50px;border-radius:18px 18px 3px 18px;background:#343877;box-shadow:0 4px 14px rgba(40,70,80,.35)"></div><div class="t" style="left:1811.80px;top:1013px;font-size:14px;letter-spacing:0.000px;color:#fff;">Help</div><svg class="abs" style="left:1845.7px;top:1018.2px;width:12.8px;height:12.4px;fill:#fff;" viewBox="0 0 512 512" preserveAspectRatio="none"><path d="M464 256a208 208 0 1 0-416 0 208 208 0 1 0 416 0M0 256a256 256 0 1 1 512 0 256 256 0 1 1-512 0m256-80c-17.7 0-32 14.3-32 32 0 13.3-10.7 24-24 24s-24-10.7-24-24c0-44.2 35.8-80 80-80s80 35.8 80 80c0 47.2-36 67.2-56 74.5v3.8c0 13.3-10.7 24-24 24s-24-10.7-24-24v-8.1c0-20.5 14.8-35.2 30.1-40.2 6.4-2.1 13.2-5.5 18.2-10.3 4.3-4.2 7.7-10 7.7-19.6 0-17.7-14.3-32-32-32zm-32 192a32 32 0 1 1 64 0 32 32 0 1 1-64 0"/></svg>
<div class="abs" style="left:1899px;top:0;width:21px;height:1080px;background:#f1f1f1"></div><div class="abs" style="left:1899px;top:21px;width:21px;height:649px;background:#cdcdcd"></div><svg class="abs" style="left:1904px;top:5px;width:11px;height:9px;fill:none;stroke:#505050;stroke-width:2.200" viewBox="0 0 11 9"><path d="M1 7.500 L5.500 2.500 L10 7.500"/></svg><svg class="abs" style="left:1904px;top:1066px;width:11px;height:9px;fill:none;stroke:#505050;stroke-width:2.200" viewBox="0 0 11 9"><path d="M1 1.500 L5.500 6.500 L10 1.500"/></svg>
</div>
</body>
</html>
